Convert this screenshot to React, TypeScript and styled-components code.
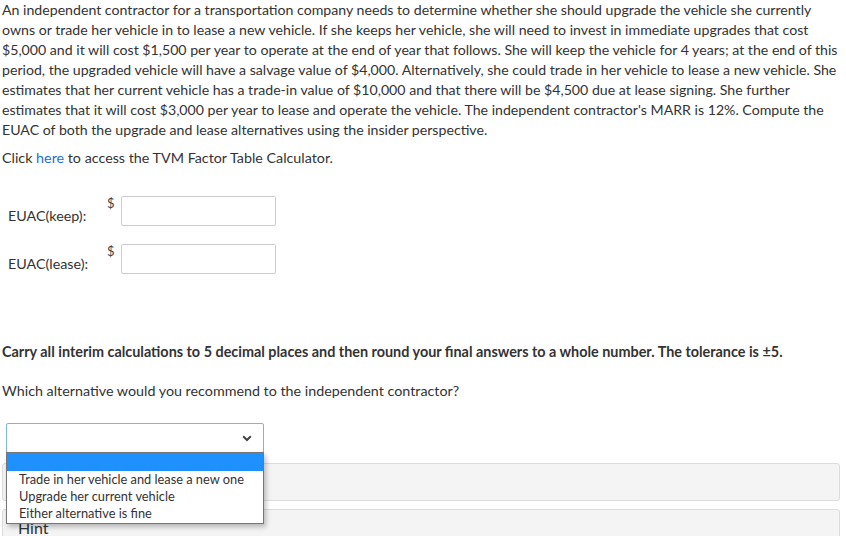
import React from "react";
import styled, { createGlobalStyle } from "styled-components";

const GlobalStyle = createGlobalStyle`
  html, body { margin: 0; padding: 0; background: #fff; }
  body {
    font-family: Lato, "Noto Sans", sans-serif;
    font-size: 14.3px;
    color: #333;
  }
`;

const Page = styled.div`
  width: 846px;
  box-sizing: border-box;
  padding: 0 2px 0 2px;
`;

const Para = styled.p`
  margin: 0 0 8px;
  line-height: 20px;
`;

const Intro = styled(Para)`
  font-size: 14.15px;
`;

const Link = styled.a`
  color: #1f6fd1;
  text-decoration: none;
`;

const Answers = styled.div`
  margin-top: 28px;
  display: flex;
  flex-direction: column;
  gap: 18px;
`;

const Row = styled.div`
  display: flex;
  align-items: flex-start;
  height: 30px;
`;

const Label = styled.div`
  box-sizing: border-box;
  width: 105px;
  padding-left: 6px;
  margin-top: 10px;
  line-height: 20px;
`;

const Dollar = styled.span`
  width: 14px;
  line-height: 14px;
  font-size: 13px;
  color: #444;
`;

const Input = styled.input`
  width: 155px;
  height: 30px;
  box-sizing: border-box;
  border: 1px solid #ccc;
  border-radius: 2px;
  margin: 0;
  padding: 0 6px;
  font-family: inherit;
  font-size: 14px;
`;

const Note = styled.p`
  margin: 68px 0 0;
  line-height: 20px;
  font-weight: 700;
  font-size: 14.4px;
`;

const Question = styled.p`
  margin: 19px 0 0;
  line-height: 20px;
`;

const SelectWrap = styled.div`
  position: relative;
  margin: 22px 0 0 4px;
  width: 258px;
  height: 30px;
`;

const SelectBox = styled.div`
  width: 100%;
  height: 100%;
  box-sizing: border-box;
  border: 1px solid #7fb3e6;
  border-radius: 2px;
  background: #fff;
  display: flex;
  align-items: center;
  justify-content: flex-end;
  padding-right: 11px;
`;

const DropList = styled.ul`
  position: absolute;
  left: 0;
  top: 29px;
  width: 258px;
  box-sizing: border-box;
  margin: 0;
  padding: 0 0 1px;
  list-style: none;
  background: #fff;
  border: 1px solid #767676;
  box-shadow: 2px 3px 5px rgba(0, 0, 0, 0.25);
  z-index: 10;
`;

const Option = styled.li<{ $active?: boolean }>`
  height: ${(p) => (p.$active ? "18px" : "17px")};
  line-height: 17px;
  padding-left: 12px;
  font-size: 12.8px;
  color: #333;
  background: ${(p) => (p.$active ? "#1e90ff" : "transparent")};
  white-space: nowrap;
`;

const Panel = styled.div<{ $height?: number }>`
  box-sizing: border-box;
  width: 838px;
  height: ${(p) => (p.$height ? `${p.$height}px` : "auto")};
  background: #f4f4f4;
  border: 1px solid #dcdcdc;
  border-radius: 3px;
  padding: 8px 15px 0;
  font-size: 16px;
  line-height: 20px;
  color: #333;
`;

const Panels = styled.div`
  margin-top: 10px;
  display: flex;
  flex-direction: column;
  gap: 8px;
`;

const Chevron = () => (
  <svg width="10" height="7" viewBox="0 0 10 7" aria-hidden="true">
    <path d="M1.2 1.3 L5 5 L8.8 1.3" fill="none" stroke="#444" strokeWidth="2" />
  </svg>
);

export default function App() {
  return (
    <>
      <GlobalStyle />
      <Page>
        <Intro>
          An independent contractor for a transportation company needs to determine whether she
          should upgrade the vehicle she currently owns or trade her vehicle in to lease a new
          vehicle. If she keeps her vehicle, she will need to invest in immediate upgrades that cost
          $5,000 and it will cost $1,500 per year to operate at the end of year that follows. She
          will keep the vehicle for 4 years; at the end of this period, the upgraded vehicle will
          have a salvage value of $4,000. Alternatively, she could trade in her vehicle to lease a
          new vehicle. She estimates that her current vehicle has a trade-in value of $10,000 and
          that there will be $4,500 due at lease signing. She further estimates that it will cost
          $3,000 per year to lease and operate the vehicle. The independent contractor's MARR is
          12%. Compute the EUAC of both the upgrade and lease alternatives using the insider
          perspective.
        </Intro>
        <Para>
          Click <Link href="#">here</Link> to access the TVM Factor Table Calculator.
        </Para>
        <Answers>
          <Row>
            <Label>EUAC(keep):</Label>
            <Dollar>$</Dollar>
            <Input type="text" />
          </Row>
          <Row>
            <Label>EUAC(lease):</Label>
            <Dollar>$</Dollar>
            <Input type="text" />
          </Row>
        </Answers>
        <Note>
          Carry all interim calculations to 5 decimal places and then round your final answers to a
          whole number. The tolerance is ±5.
        </Note>
        <Question>Which alternative would you recommend to the independent contractor?</Question>
        <SelectWrap>
          <SelectBox>
            <Chevron />
          </SelectBox>
          <DropList>
            <Option $active>{"\u00a0"}</Option>
            <Option>Trade in her vehicle and lease a new one</Option>
            <Option>Upgrade her current vehicle</Option>
            <Option>Either alternative is fine</Option>
          </DropList>
        </SelectWrap>
        <Panels>
          <Panel $height={38} />
          <Panel $height={60}>Hint</Panel>
        </Panels>
      </Page>
    </>
  );
}
